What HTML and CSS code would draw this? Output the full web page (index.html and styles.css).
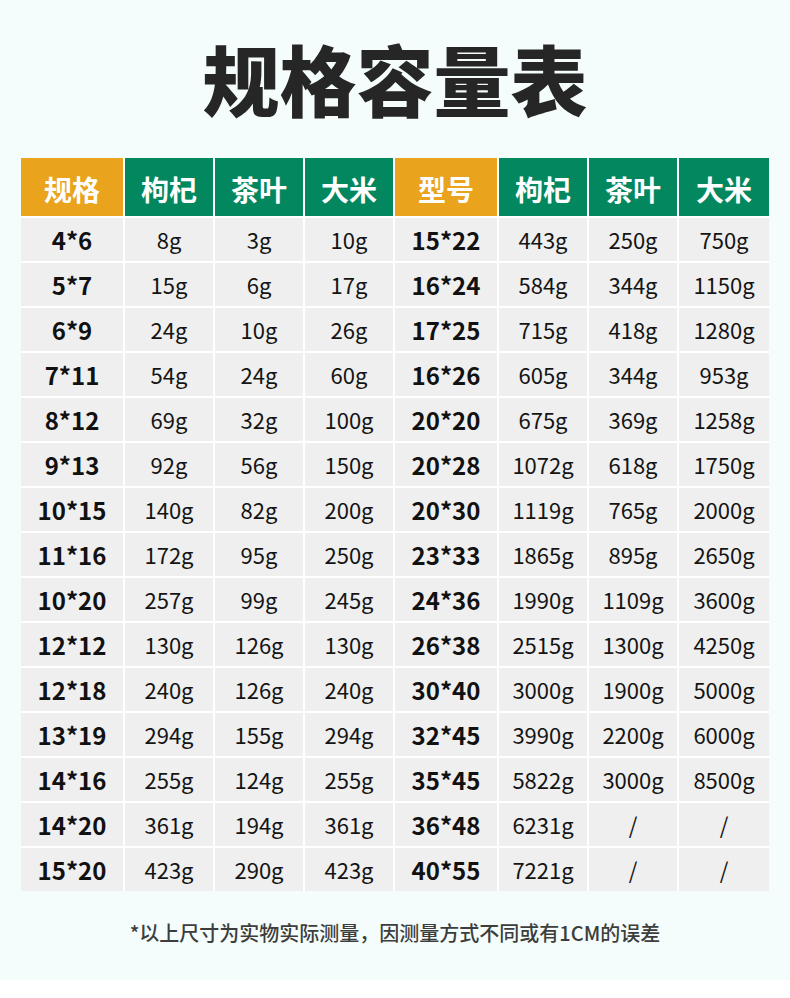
FILE: index.html
```html
<!DOCTYPE html>
<html lang="zh-CN">
<head>
<meta charset="utf-8">
<title>规格容量表</title>
<link rel="stylesheet" href="styles.css">
</head>
<body>
<main class="page">
  <h1 class="title">规格容量表</h1>
  <div class="table">
    <div class="th th-size">规格</div><div class="th">枸杞</div><div class="th">茶叶</div><div class="th">大米</div>
    <div class="th th-size">型号</div><div class="th">枸杞</div><div class="th">茶叶</div><div class="th">大米</div>

    <div class="td size">4*6</div><div class="td">8g</div><div class="td">3g</div><div class="td">10g</div>
    <div class="td size">15*22</div><div class="td">443g</div><div class="td">250g</div><div class="td">750g</div>

    <div class="td size">5*7</div><div class="td">15g</div><div class="td">6g</div><div class="td">17g</div>
    <div class="td size">16*24</div><div class="td">584g</div><div class="td">344g</div><div class="td">1150g</div>

    <div class="td size">6*9</div><div class="td">24g</div><div class="td">10g</div><div class="td">26g</div>
    <div class="td size">17*25</div><div class="td">715g</div><div class="td">418g</div><div class="td">1280g</div>

    <div class="td size">7*11</div><div class="td">54g</div><div class="td">24g</div><div class="td">60g</div>
    <div class="td size">16*26</div><div class="td">605g</div><div class="td">344g</div><div class="td">953g</div>

    <div class="td size">8*12</div><div class="td">69g</div><div class="td">32g</div><div class="td">100g</div>
    <div class="td size">20*20</div><div class="td">675g</div><div class="td">369g</div><div class="td">1258g</div>

    <div class="td size">9*13</div><div class="td">92g</div><div class="td">56g</div><div class="td">150g</div>
    <div class="td size">20*28</div><div class="td">1072g</div><div class="td">618g</div><div class="td">1750g</div>

    <div class="td size">10*15</div><div class="td">140g</div><div class="td">82g</div><div class="td">200g</div>
    <div class="td size">20*30</div><div class="td">1119g</div><div class="td">765g</div><div class="td">2000g</div>

    <div class="td size">11*16</div><div class="td">172g</div><div class="td">95g</div><div class="td">250g</div>
    <div class="td size">23*33</div><div class="td">1865g</div><div class="td">895g</div><div class="td">2650g</div>

    <div class="td size">10*20</div><div class="td">257g</div><div class="td">99g</div><div class="td">245g</div>
    <div class="td size">24*36</div><div class="td">1990g</div><div class="td">1109g</div><div class="td">3600g</div>

    <div class="td size">12*12</div><div class="td">130g</div><div class="td">126g</div><div class="td">130g</div>
    <div class="td size">26*38</div><div class="td">2515g</div><div class="td">1300g</div><div class="td">4250g</div>

    <div class="td size">12*18</div><div class="td">240g</div><div class="td">126g</div><div class="td">240g</div>
    <div class="td size">30*40</div><div class="td">3000g</div><div class="td">1900g</div><div class="td">5000g</div>

    <div class="td size">13*19</div><div class="td">294g</div><div class="td">155g</div><div class="td">294g</div>
    <div class="td size">32*45</div><div class="td">3990g</div><div class="td">2200g</div><div class="td">6000g</div>

    <div class="td size">14*16</div><div class="td">255g</div><div class="td">124g</div><div class="td">255g</div>
    <div class="td size">35*45</div><div class="td">5822g</div><div class="td">3000g</div><div class="td">8500g</div>

    <div class="td size">14*20</div><div class="td">361g</div><div class="td">194g</div><div class="td">361g</div>
    <div class="td size">36*48</div><div class="td">6231g</div><div class="td">/</div><div class="td">/</div>

    <div class="td size">15*20</div><div class="td">423g</div><div class="td">290g</div><div class="td">423g</div>
    <div class="td size">40*55</div><div class="td">7221g</div><div class="td">/</div><div class="td">/</div>
  </div>
  <p class="note">*以上尺寸为实物实际测量，因测量方式不同或有1CM的误差</p>
</main>
</body>
</html>
```

FILE: styles.css
```css
html, body {
  margin: 0;
  padding: 0;
  background: #ffffff;
}

body {
  font-family: "Noto Sans CJK SC", "Noto Sans", sans-serif;
  color: #1a1a1a;
}

.page {
  height: 980px;
  background: #f4fdfb;
  display: flex;
  flex-direction: column;
  align-items: center;
  box-sizing: border-box;
  padding-top: 34px;
}

.title {
  margin: 0;
  font-size: 77px;
  line-height: 88px;
  font-weight: 900;
  color: #262626;
  letter-spacing: 0;
}

.table {
  margin-top: 36px;
  display: grid;
  grid-template-columns: 102px 88px 88px 88px 102px 88px 88px 90px;
  grid-template-rows: 58px repeat(15, 43px);
  column-gap: 2px;
  row-gap: 2px;
  background: #ffffff;
}

.th {
  background: #03875f;
  color: #ffffff;
  font-size: 28px;
  font-weight: 700;
  display: flex;
  align-items: center;
  justify-content: center;
  padding-top: 3px;
  box-sizing: border-box;
}

.th-size {
  background: #e9a31c;
}

.td {
  background: #efefef;
  display: flex;
  align-items: center;
  justify-content: center;
  font-size: 22px;
  font-weight: 400;
  color: #141414;
  padding-bottom: 1px;
  box-sizing: border-box;
}

.td.size {
  font-size: 24px;
  font-weight: 700;
  color: #111111;
}

.note {
  margin: 28px 0 0;
  font-size: 20px;
  line-height: 28px;
  font-weight: 500;
  color: #3d3d3d;
}
```
